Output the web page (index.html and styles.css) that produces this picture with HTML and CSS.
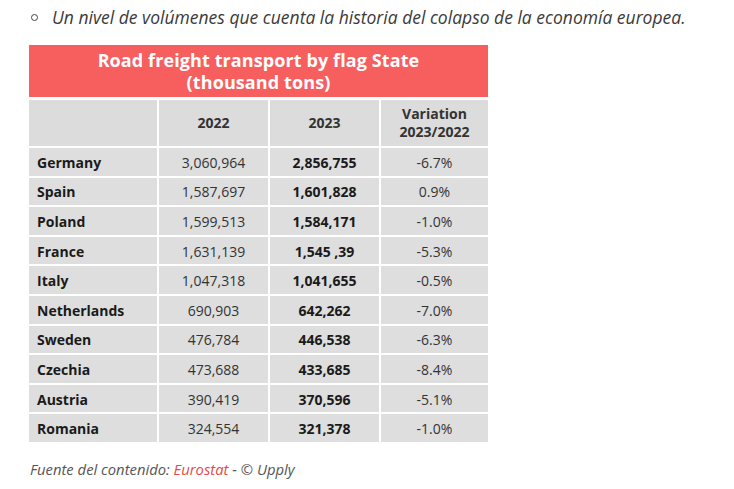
FILE: index.html
```html
<!DOCTYPE html>
<html lang="es">
<head>
<meta charset="utf-8">
<link rel="stylesheet" href="styles.css">
</head>
<body>
<div class="page">
  <div class="bullet-line">
    <span class="bullet"></span>
    <em class="lead">Un nivel de volúmenes que cuenta la historia del colapso de la economía europea.</em>
  </div>
  <div class="figure">
    <div class="title">Road freight transport by flag State<br>(thousand tons)</div>
    <div class="grid">
      <div class="hd"></div>
      <div class="hd">2022</div>
      <div class="hd">2023</div>
      <div class="hd">Variation<br>2023/2022</div>

      <div class="c name">Germany</div><div class="c">3,060,964</div><div class="c b">2,856,755</div><div class="c">-6.7%</div>
      <div class="c name">Spain</div><div class="c">1,587,697</div><div class="c b">1,601,828</div><div class="c">0.9%</div>
      <div class="c name">Poland</div><div class="c">1,599,513</div><div class="c b">1,584,171</div><div class="c">-1.0%</div>
      <div class="c name">France</div><div class="c">1,631,139</div><div class="c b">1,545 ,39</div><div class="c">-5.3%</div>
      <div class="c name">Italy</div><div class="c">1,047,318</div><div class="c b">1,041,655</div><div class="c">-0.5%</div>
      <div class="c name">Netherlands</div><div class="c">690,903</div><div class="c b">642,262</div><div class="c">-7.0%</div>
      <div class="c name">Sweden</div><div class="c">476,784</div><div class="c b">446,538</div><div class="c">-6.3%</div>
      <div class="c name">Czechia</div><div class="c">473,688</div><div class="c b">433,685</div><div class="c">-8.4%</div>
      <div class="c name">Austria</div><div class="c">390,419</div><div class="c b">370,596</div><div class="c">-5.1%</div>
      <div class="c name">Romania</div><div class="c">324,554</div><div class="c b">321,378</div><div class="c">-1.0%</div>
    </div>
  </div>
  <p class="source"><em>Fuente del contenido: <a class="link">Eurostat</a> - © Upply</em></p>
</div>
</body>
</html>
```
FILE: styles.css
```css
html, body {
  margin: 0;
  padding: 0;
  background: #fff;
}
.page {
  font-family: "Open Sans", "Noto Sans", sans-serif;
  color: #333;
  padding: 5px 0 0 29px;
}
.bullet-line {
  display: flex;
  align-items: center;
  gap: 14px;
  height: 24px;
  padding-left: 2px;
}
.bullet {
  width: 5px;
  height: 5px;
  border: 1px solid #444;
  border-radius: 50%;
  flex: none;
}
.lead {
  font-size: 17.5px;
  font-weight: 500;
  color: #3a3a3a;
  font-style: italic;
  white-space: nowrap;
}
.figure {
  width: 459px;
  margin-top: 16px;
}
.title {
  background: #f75e5e;
  color: #fff;
  font-weight: 700;
  font-size: 18px;
  line-height: 22px;
  text-align: center;
  height: 52px;
  box-sizing: border-box;
  padding-top: 4px;
  letter-spacing: 0.1px;
}
.grid {
  margin-top: 3px;
  display: grid;
  grid-template-columns: 128px 109px 109px 107px;
  grid-template-rows: 46px;
  grid-auto-rows: 27.6px;
  gap: 2px;
}
.hd {
  background: #dcdcdc;
  font-weight: 700;
  font-size: 14px;
  line-height: 18px;
  color: #333;
  display: flex;
  align-items: center;
  justify-content: center;
  text-align: center;
}
.c {
  background: #dedede;
  font-size: 14px;
  color: #333;
  display: flex;
  align-items: center;
  justify-content: center;
  padding-top: 1px;
}
.c.name {
  justify-content: flex-start;
  padding-left: 8px;
  font-weight: 700;
  color: #1a1a1a;
}
.c.b {
  font-weight: 700;
  color: #1a1a1a;
}
.source {
  margin: 17px 0 0 1px;
  font-size: 14.8px;
  color: #555;
}
.link {
  color: #e8484b;
}
```
